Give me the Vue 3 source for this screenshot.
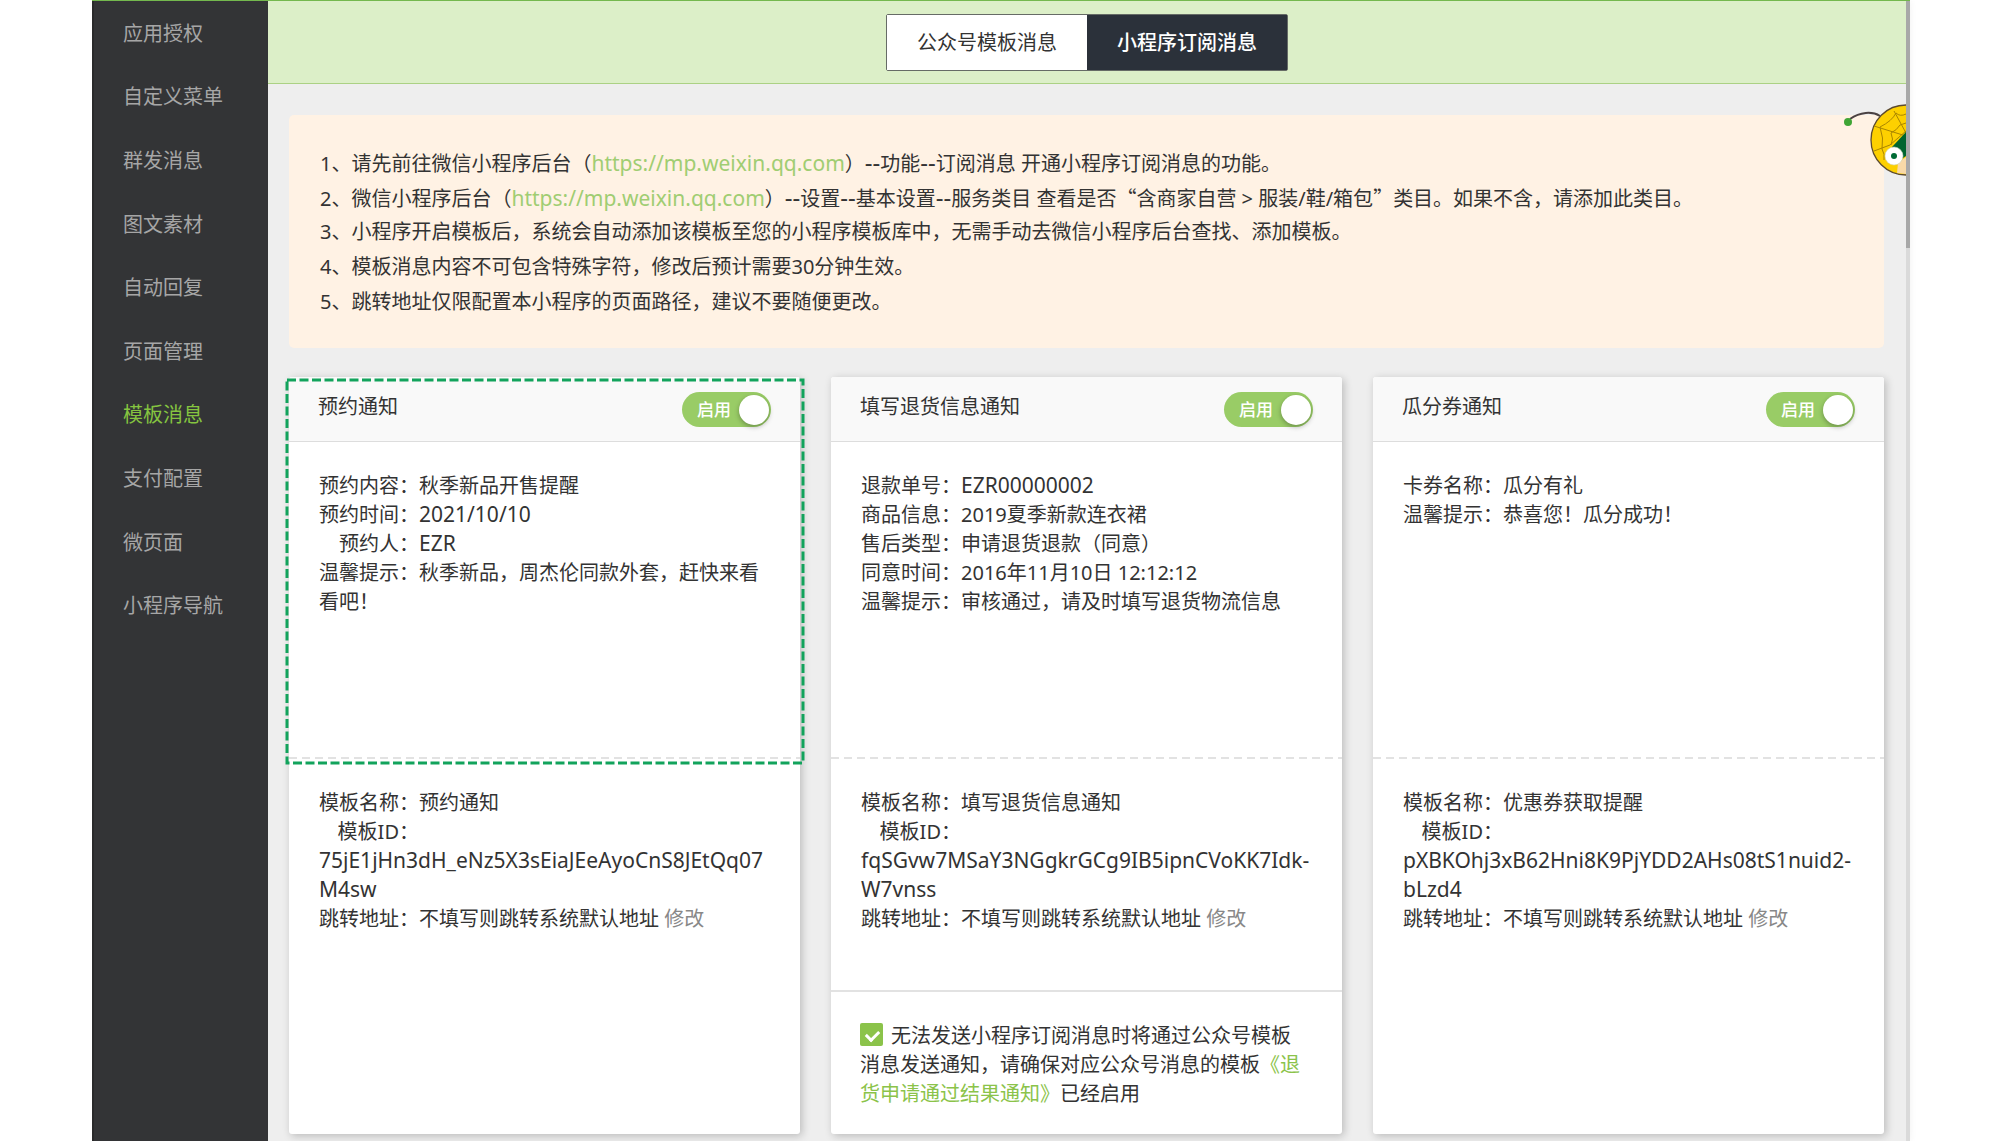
<script setup>
import { ref } from 'vue'

const menu = ['应用授权', '自定义菜单', '群发消息', '图文素材', '自动回复', '页面管理', '模板消息', '支付配置', '微页面', '小程序导航']
const active = ref('模板消息')

const cards = ref([
  {
    title: '预约通知',
    enabled: true,
    highlighted: true,
    rows: [
      { label: '预约内容', value: '秋季新品开售提醒' },
      { label: '预约时间', value: '2021/10/10', latin: true },
      { label: '预约人', value: 'EZR', latin: true },
      { label: '温馨提示', value: '秋季新品，周杰伦同款外套，赶快来看看吧！' },
    ],
    template: '预约通知',
    idLines: ['75jE1jHn3dH_eNz5X3sEiaJEeAyoCnS8JEtQq07', 'M4sw'],
  },
  {
    title: '填写退货信息通知',
    enabled: true,
    rows: [
      { label: '退款单号', value: 'EZR00000002', latin: true },
      { label: '商品信息', value: '2019夏季新款连衣裙' },
      { label: '售后类型', value: '申请退货退款（同意）' },
      { label: '同意时间', value: '2016年11月10日 12:12:12' },
      { label: '温馨提示', value: '审核通过，请及时填写退货物流信息' },
    ],
    template: '填写退货信息通知',
    idLines: ['fqSGvw7MSaY3NGgkrGCg9IB5ipnCVoKK7Idk-', 'W7vnss'],
    fallback: '《退货申请通过结果通知》',
    fallbackOn: true,
  },
  {
    title: '瓜分券通知',
    enabled: true,
    rows: [
      { label: '卡券名称', value: '瓜分有礼' },
      { label: '温馨提示', value: '恭喜您！瓜分成功！' },
    ],
    template: '优惠券获取提醒',
    idLines: ['pXBKOhj3xB62Hni8K9PjYDD2AHs08tS1nuid2-', 'bLzd4'],
  },
])
</script>

<template>
  <div class="page">
    <div class="shell">
      <nav class="sidebar">
        <ul>
          <li v-for="item in menu" :key="item">
            <a href="#" :class="{ active: item === active }" @click.prevent="active = item">{{ item }}</a>
          </li>
        </ul>
      </nav>

      <main class="main">
        <header class="topbar">
          <div class="tabs">
            <button type="button" class="tab">公众号模板消息</button>
            <button type="button" class="tab selected">小程序订阅消息</button>
          </div>
        </header>

        <div class="content">
          <section class="notice">
            <p>1、请先前往微信小程序后台（<a class="latin" href="https://mp.weixin.qq.com">https://mp.weixin.qq.com</a>）<span class="dash">--</span>功能<span class="dash">--</span>订阅消息 开通小程序订阅消息的功能。</p>
            <p>2、微信小程序后台（<a class="latin" href="https://mp.weixin.qq.com">https://mp.weixin.qq.com</a>）<span class="dash">--</span>设置<span class="dash">--</span>基本设置<span class="dash">--</span>服务类目 查看是否<span class="quote">“</span>含商家自营 &gt; 服装/鞋/箱包<span class="quote">”</span>类目。如果不含，请添加此类目。</p>
            <p>3、小程序开启模板后，系统会自动添加该模板至您的小程序模板库中，无需手动去微信小程序后台查找、添加模板。</p>
            <p>4、模板消息内容不可包含特殊字符，修改后预计需要30分钟生效。</p>
            <p>5、跳转地址仅限配置本小程序的页面路径，建议不要随便更改。</p>
          </section>

          <div class="cards">
            <article v-for="card in cards" :key="card.title" class="card">
              <header class="card-head">
                <h2>{{ card.title }}</h2>
                <label class="switch">
                  <input v-model="card.enabled" type="checkbox" />
                  <span>启用</span>
                </label>
              </header>
              <div class="sample">
                <p v-for="row in card.rows" :key="row.label"><span class="label">{{ row.label }}：</span><span :class="{ latin: row.latin }">{{ row.value }}</span></p>
              </div>
              <div class="detail">
                <p><span class="label">模板名称：</span>{{ card.template }}</p>
                <p><span class="label">模板ID：</span></p>
                <p v-for="line in card.idLines" :key="line" class="id latin">{{ line }}</p>
                <p><span class="label">跳转地址：</span>不填写则跳转系统默认地址 <a href="#" class="edit">修改</a></p>
              </div>
              <div v-if="card.fallback" class="fallback">
                <input id="fallback" v-model="card.fallbackOn" type="checkbox" class="tick" /><label for="fallback">无法发送小程序订阅消息时将通过公众号模板消息发送通知，请确保对应公众号消息的模板<a href="#">{{ card.fallback }}</a>已经启用</label>
              </div>
              <svg v-if="card.highlighted" class="outline" aria-hidden="true">
                <rect width="100%" height="100%" fill="none" stroke="#12a35c" stroke-width="3" stroke-dasharray="9 3.5" />
              </svg>
            </article>
          </div>
        </div>

        <svg class="mascot" viewBox="0 0 64 80" aria-hidden="true">
          <path d="M8 19C18 12 30 11 38 16" fill="none" stroke="#4a4142" stroke-width="2" />
          <circle cx="6" cy="22" r="4" fill="#3fa535" />
          <circle cx="64" cy="40" r="35" fill="#fdd000" stroke="#5c4a2e" stroke-width="1.3" />
          <g fill="none" stroke="#a98500" stroke-width="1">
            <path d="M64 33L52 11M64 36L32 26M32 51L48 45L64 31" />
            <path d="M64 14Q58 17 54 13Q50 21 38 27Q42 38 40 49Q43 54 42 60" />
            <path d="M64 23L58 25Q55 30 49 33Q52 39 49 45" />
          </g>
          <path d="M50 47L64 32V56L58 60Z" fill="#00652f" />
          <path d="M56 63L64 57V74L55 73Z" fill="#f8d9a8" />
          <circle cx="52" cy="56" r="9" fill="#fff" stroke="#cfd5c0" stroke-width=".6" />
          <circle cx="52" cy="56" r="3" fill="#006b35" />
        </svg>
      </main>
      <div class="scrollbar"><div class="thumb"></div></div>
    </div>
  </div>
</template>

<style>
body {
  margin: 0;
  background: #fff;
}
</style>

<style scoped>
* {
  box-sizing: border-box;
}
.page {
  padding: 0 92px;
  font-family: "Noto Sans", "Noto Sans CJK SC", sans-serif;
  font-size: 20px;
  line-height: 29px;
  color: #333;
}
p, ul, h2 {
  margin: 0;
  padding: 0;
}
a {
  text-decoration: none;
  color: #8bc34a;
}
.latin {
  font-size: 21px;
}
.dash {
  font-size: 24px;
}
.quote {
  font-family: "Noto Sans CJK SC", sans-serif;
}
.shell {
  display: flex;
  min-height: 100vh;
  border-top: 1px solid #74b84e;
}
.sidebar {
  flex: 0 0 176px;
  background: #333436;
  border-left: 2px solid #2a2a2b;
}
.sidebar ul {
  display: flex;
  flex-direction: column;
  height: 636px;
  list-style: none;
}
.sidebar li {
  flex: 1;
  display: flex;
  align-items: center;
  padding: 1px 0 0 29px;
}
.sidebar a {
  color: #a6a6a6;
}
.sidebar a.active {
  color: #85c440;
}
.main {
  position: relative;
  flex: 1;
  min-width: 0;
  background: #eee;
}
.topbar {
  display: flex;
  justify-content: center;
  padding: 13px 0 12px;
  background: #dcefc8;
  border-bottom: 1px solid #abd184;
}
.tabs {
  display: flex;
  border: 1px solid #666b66;
  border-radius: 2px;
}
.tab {
  width: 200px;
  height: 55px;
  padding: 0;
  border: 0;
  background: #fff;
  color: #333;
  font: inherit;
}
.tab.selected {
  background: #2b313a;
  color: #fff;
  font-weight: 500;
}
.content {
  padding: 31px 22px 7px 21px;
}
.notice {
  padding: 29px 31px;
  line-height: 35px;
  background: #fff2e4;
  border-radius: 5px;
}
.notice p {
  height: 35px;
}
.notice a {
  color: #a0cd72;
}
.cards {
  display: grid;
  grid-template-columns: repeat(3, minmax(0, 1fr));
  gap: 31px;
  margin-top: 29px;
}
.card {
  position: relative;
  display: flex;
  flex-direction: column;
  min-height: 757px;
  background: #fff;
  border-radius: 3px;
  box-shadow: 2px 2px 8px rgba(0, 0, 0, 0.22);
}
.card-head {
  display: flex;
  justify-content: space-between;
  align-items: flex-start;
  height: 65px;
  padding: 15px 29px 0;
  background: #f9f9f9;
  border-bottom: 1px solid #ddd;
  border-radius: 3px 3px 0 0;
}
h2 {
  font-size: 20px;
  font-weight: 400;
}
.switch {
  position: relative;
  display: flex;
  align-items: center;
  width: 89px;
  height: 35px;
  padding-left: 15px;
  color: #fff;
  font-size: 17px;
  font-weight: 500;
  background: #99cc66;
  border-radius: 18px;
}
.switch input {
  position: absolute;
  top: 3px;
  right: 2px;
  width: 30px;
  height: 30px;
  margin: 0;
  appearance: none;
  background: #fff;
  border-radius: 50%;
  box-shadow: 0 2px 5px rgba(0, 0, 0, 0.3);
}
.sample {
  height: 317px;
  padding: 29px 30px 0;
  background: repeating-linear-gradient(90deg, #e2e2e2 0 8px, transparent 8px 13px) bottom / 100% 2px no-repeat;
}
.detail {
  flex: 1;
  padding: 29px 30px 0;
}
.sample p, .detail p {
  min-height: 29px;
}
.label {
  display: inline-block;
  width: 100px;
  text-align: right;
}
.id {
  height: 29px;
  white-space: nowrap;
}
.edit {
  color: #888;
}
.fallback {
  padding: 29px 32px 26px 29px;
  border-top: 2px solid #e2e2e2;
}
.tick {
  position: relative;
  width: 23px;
  height: 23px;
  margin: 0 8px 0 0;
  appearance: none;
  vertical-align: -3px;
  background: #8bc34a;
  border-radius: 2px;
}
.tick:checked::after {
  content: "";
  position: absolute;
  left: 8px;
  top: 5px;
  width: 6px;
  height: 10px;
  border: solid #fff;
  border-width: 0 3px 3px 0;
  transform: rotate(45deg);
}
.outline {
  position: absolute;
  top: 3px;
  left: -2px;
  width: calc(100% + 5px);
  height: 383px;
  overflow: visible;
  pointer-events: none;
}
.mascot {
  position: absolute;
  top: 99px;
  right: 0;
  width: 64px;
  height: 80px;
}
.scrollbar {
  flex: 0 0 4px;
  background: #dadada;
  box-shadow: -2px 0 8px rgba(0, 0, 0, 0.12);
}
.thumb {
  height: 247px;
  background: #a8a8a8;
}
</style>
